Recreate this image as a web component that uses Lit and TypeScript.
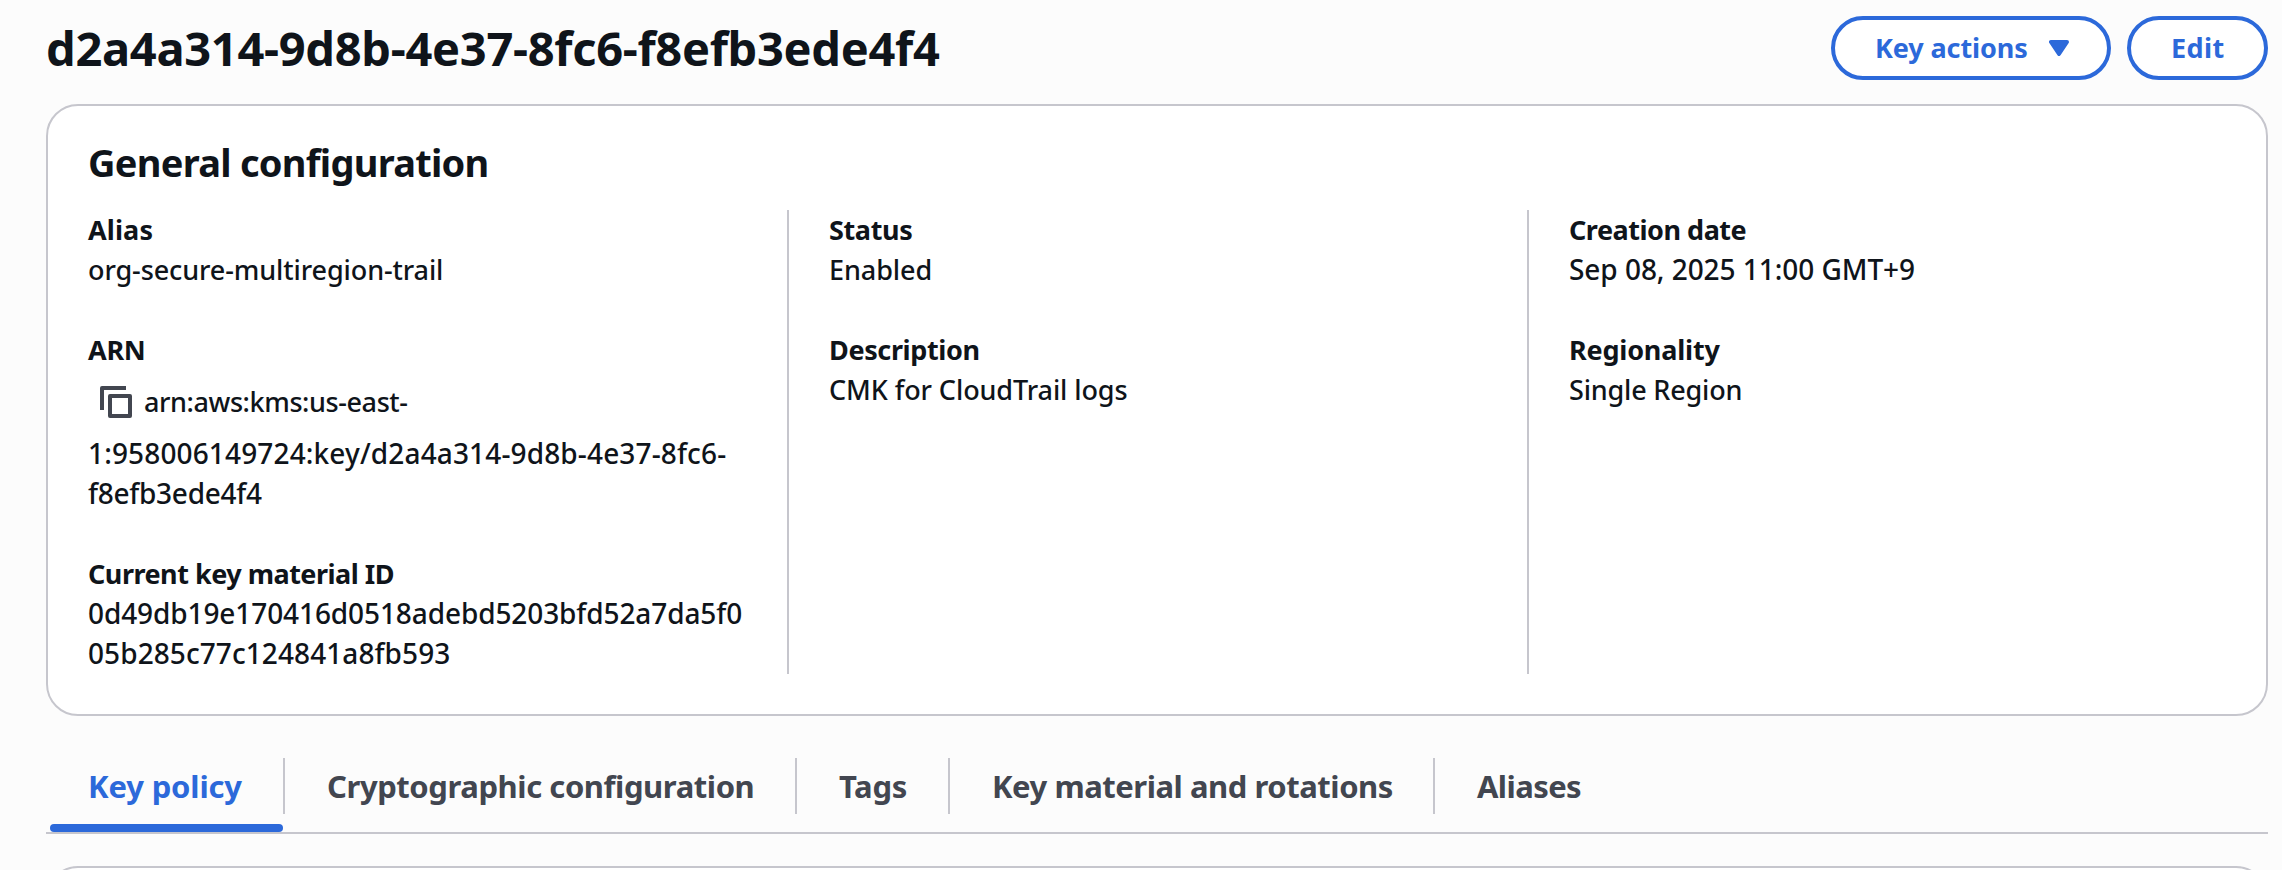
import { LitElement, html, css, svg } from "lit";
import { classMap } from "lit/directives/class-map.js";

interface Tab { label: string; cls: string; }

const TABS: Tab[] = [
  { label: "Key policy", cls: "tab-policy" },
  { label: "Cryptographic configuration", cls: "tab-crypto" },
  { label: "Tags", cls: "tab-tags" },
  { label: "Key material and rotations", cls: "tab-material" },
  { label: "Aliases", cls: "tab-aliases" },
];

const copyIcon = svg`<svg class="copy-icon" viewBox="0 0 32 32" width="32" height="32" fill="none" stroke="currentColor" stroke-width="4" stroke-linejoin="round" aria-hidden="true">
  <path d="M2 24V2h24" />
  <path d="M10 10h20v20H10z" />
</svg>`;

const caretIcon = svg`<svg class="caret" viewBox="0 0 20 16" width="20" height="16" aria-hidden="true">
  <path d="M2 2h16l-8 12z" fill="currentColor" stroke="currentColor" stroke-width="4" stroke-linejoin="round" />
</svg>`;

class AppRoot extends LitElement {
  static properties = { active: { state: true } };
  declare active: number;

  constructor() {
    super();
    this.active = 0;
  }

  static styles = css`
    :host {
      display: block;
      box-sizing: border-box;
      height: 870px;
      overflow: hidden;
      padding: 16px 14px 0 46px;
      background: #fcfcfc;
      color: #0f141a;
      font: 500 28px/40px "Noto Sans", "Open Sans", sans-serif;
      white-space: nowrap;
    }
    * { box-sizing: border-box; }
    h1, h2, dl, dt, dd { margin: 0; }
    .header { display: flex; align-items: center; height: 64px; }
    h1 {
      flex: 1;
      font-size: 47px;
      line-height: 60px;
      font-weight: 700;
      letter-spacing: -0.3px;
    }
    .actions { display: flex; gap: 16px; }
    .button {
      display: flex;
      align-items: center;
      height: 64px;
      padding: 0 38px 0 40px;
      border: 4px solid #2c69da;
      border-radius: 32px;
      background: #fff;
      color: #2c69da;
      font-size: 27px;
      line-height: 40px;
      font-weight: 700;
    }
    .menu { width: 280px; justify-content: space-between; letter-spacing: -0.1px; }
    .edit { width: 141px; letter-spacing: 0.4px; }
    .caret { display: block; overflow: hidden; }
    .card {
      margin-top: 24px;
      height: 612px;
      padding: 32px 40px 0;
      border: 2px solid #c6c6cd;
      border-radius: 32px;
      background: #fff;
    }
    h2 {
      font-size: 38px;
      line-height: 48px;
      font-weight: 700;
      letter-spacing: -0.73px;
    }
    .columns { display: grid; grid-template-columns: 699px 740px 699px; height: 464px; margin-top: 24px; }
    .column { display: flex; flex-direction: column; gap: 40px; }
    .column + .column { border-left: 2px solid #c6c6cd; padding-left: 40px; }
    dt { font-size: 27px; font-weight: 700; letter-spacing: -0.37px; }
    .first-line { display: flex; align-items: center; height: 64px; padding-left: 12px; }
    .copy-icon { display: block; color: #424650; margin-right: 12px; }
    .text { font-size: 27px; }
    .alias { letter-spacing: -0.1px; }
    .alias-label { letter-spacing: 0.1px; }
    .arn-label { letter-spacing: -0.3px; }
    .arn-start { font-size: 27px; letter-spacing: -0.41px; }
    .arn-middle { letter-spacing: 0.14px; }
    .arn-end { letter-spacing: -0.27px; }
    .material-label { letter-spacing: -0.5px; }
    .material { letter-spacing: -0.1px; }
    .material-end { letter-spacing: 0.08px; }
    .arn-middle, .arn-end, .material, .material-end, .date { margin-top: -1px; padding-bottom: 1px; height: 41px; margin-bottom: 0; }
    .enabled { letter-spacing: -0.08px; }
    .description { letter-spacing: -0.09px; }
    .date-label { letter-spacing: -0.48px; }
    .date { letter-spacing: -0.05px; }
    .regionality-label { letter-spacing: -0.2px; }
    .regionality { letter-spacing: -0.18px; }
    .tabs {
      display: flex;
      height: 76px;
      margin-top: 42px;
      border-bottom: 2px solid #c6c6cd;
    }
    .tab {
      position: relative;
      height: 56px;
      padding: 8px 0 0 42px;
      border-right: 2px solid #c6c6cd;
      color: #424650;
      font-size: 31px;
      line-height: 40px;
      font-weight: 700;
    }
    .tab:last-child { border-right: 0; }
    .tab.active { color: #2c69da; }
    .tab.active::after {
      content: "";
      position: absolute;
      left: 4px;
      right: 0;
      bottom: -18px;
      height: 8px;
      border-radius: 4px;
      background: #2c69da;
    }
    .tab-policy { width: 239px; letter-spacing: -0.15px; }
    .tab-crypto { width: 512px; letter-spacing: -0.43px; }
    .tab-tags { width: 153px; letter-spacing: -0.3px; }
    .tab-material { width: 485px; letter-spacing: -0.46px; }
    .tab-aliases { letter-spacing: -0.58px; }
    .panel {
      height: 120px;
      margin-top: 32px;
      border: 2px solid #c6c6cd;
      border-radius: 32px;
      background: #fff;
    }
  `;

  render() {
    return html`
      <header class="header">
        <h1>d2a4a314-9d8b-4e37-8fc6-f8efb3ede4f4</h1>
        <div class="actions">
          <div class="button menu" role="button"><span>Key actions</span>${caretIcon}</div>
          <div class="button edit" role="button">Edit</div>
        </div>
      </header>
      <section class="card">
        <h2>General configuration</h2>
        <div class="columns">
          <div class="column">
            <dl><dt class="alias-label">Alias</dt><dd class="text alias">org-secure-multiregion-trail</dd></dl>
            <dl>
              <dt class="arn-label">ARN</dt>
              <dd>
                <div class="first-line">${copyIcon}<span class="arn-start">arn:aws:kms:us-east-</span></div>
                <div class="arn-middle">1:958006149724:key/d2a4a314-9d8b-4e37-8fc6-</div>
                <div class="arn-end">f8efb3ede4f4</div>
              </dd>
            </dl>
            <dl>
              <dt class="material-label">Current key material ID</dt>
              <dd>
                <div class="material">0d49db19e170416d0518adebd5203bfd52a7da5f0</div>
                <div class="material-end">05b285c77c124841a8fb593</div>
              </dd>
            </dl>
          </div>
          <div class="column">
            <dl><dt>Status</dt><dd class="text enabled">Enabled</dd></dl>
            <dl><dt>Description</dt><dd class="text description">CMK for CloudTrail logs</dd></dl>
          </div>
          <div class="column">
            <dl><dt class="date-label">Creation date</dt><dd class="date">Sep 08, 2025 11:00 GMT+9</dd></dl>
            <dl><dt class="regionality-label">Regionality</dt><dd class="text regionality">Single Region</dd></dl>
          </div>
        </div>
      </section>
      <nav class="tabs" role="tablist">
        ${TABS.map((t, i) => html`<div role="tab"
          class=${classMap({ tab: true, [t.cls]: true, active: i === this.active })}
          @click=${() => { this.active = i; }}>${t.label}</div>`)}
      </nav>
      <section class="panel"></section>
    `;
  }
}
customElements.define("app-root", AppRoot);
